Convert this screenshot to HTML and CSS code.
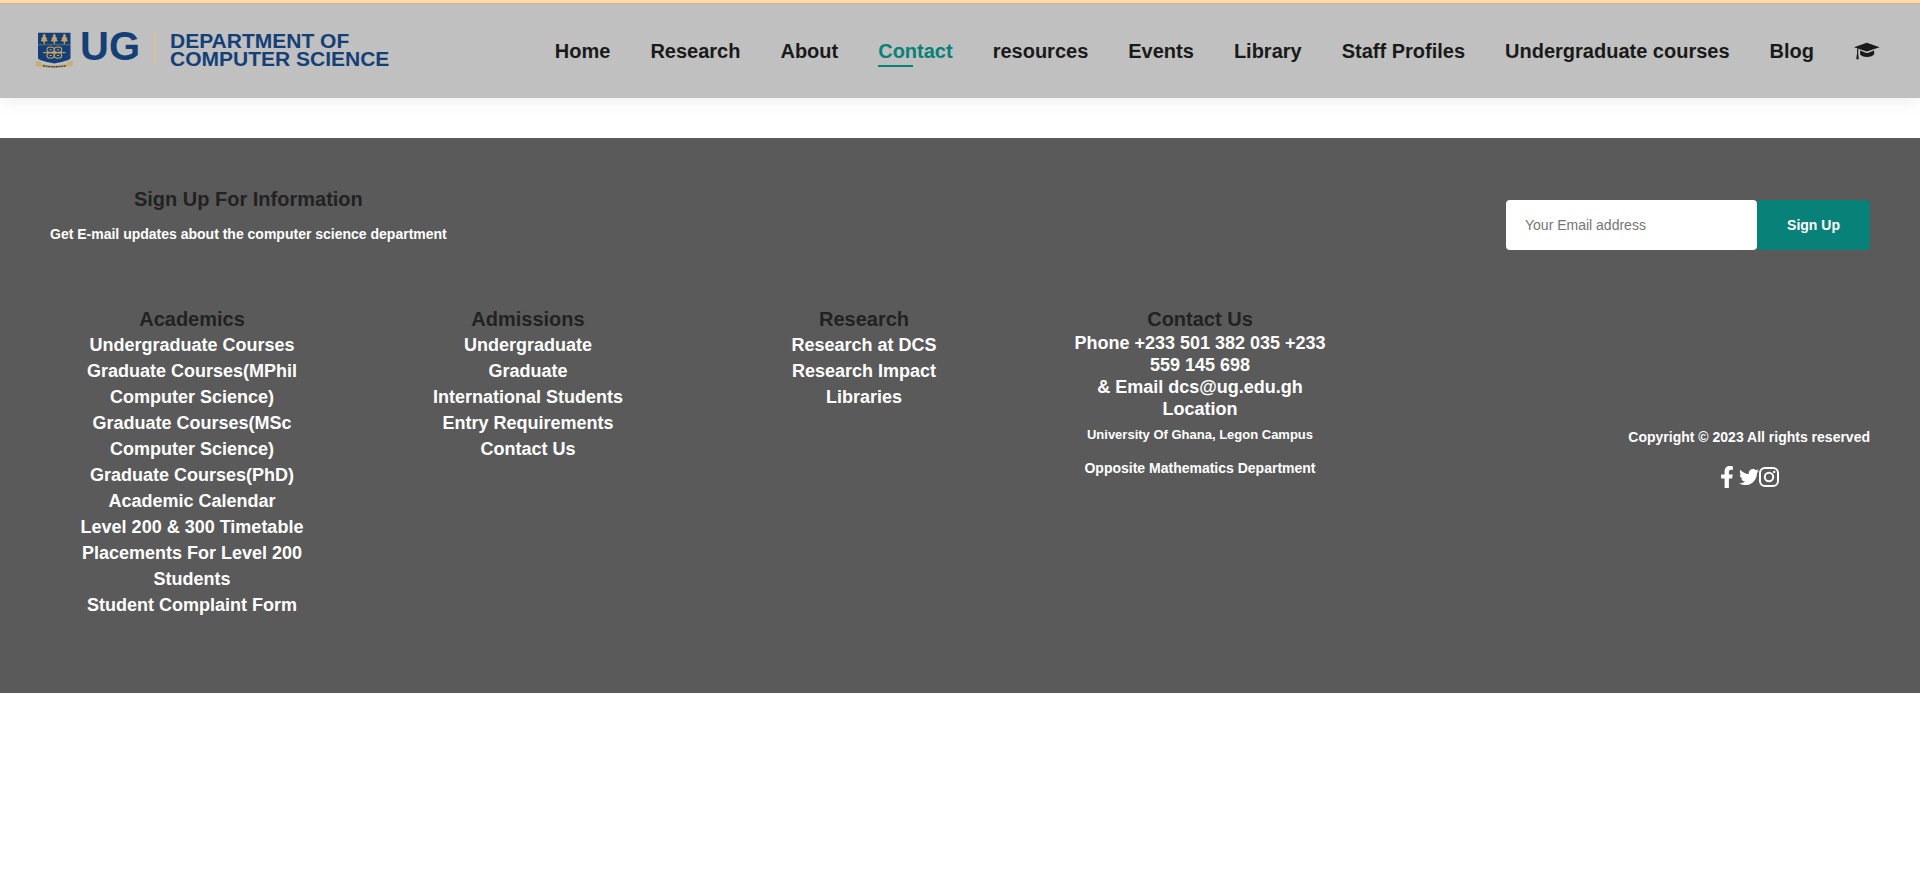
FILE: index.html
```html
<!DOCTYPE html>
<html lang="en">
<head>
<meta charset="utf-8">
<title>Department of Computer Science - Contact</title>
<link rel="stylesheet" href="styles.css">
</head>
<body>
<header class="header">
  <a class="logo" href="#">
    <svg class="crest" viewBox="0 0 40 37" aria-hidden="true">
      <path d="M4 .7h32.500v25c0 2.500-7 3.800-16.200 5.800C11 29.500 4 28.200 4 25.700z" fill="#153f77"/>
      <path d="M4 12.800h32.500" stroke="#8b8870" stroke-width=".7"/>
      <g fill="#c2a368">
        <path d="M10.200 1.500l1.800 2.600-.8.300 2.200 2-1 .5 1.400 2-3 .8v2.200H9.600V9.700l-3-.8 1.400-2-1-.5 2.200-2-.8-.3z"/>
        <path d="M20.300 1.500l1.800 2.600-.8.300 2.200 2-1 .5 1.400 2-3 .8v2.200h-1.200V9.700l-3-.8 1.400-2-1-.5 2.200-2-.8-.3z"/>
        <path d="M30.400 1.500l1.800 2.600-.8.300 2.200 2-1 .5 1.400 2-3 .8v2.200h-1.200V9.700l-3-.8 1.400-2-1-.5 2.200-2-.8-.3z"/>
      </g>
      <g fill="none" stroke="#c2a368" stroke-width="1.100">
        <path d="M9 20.600h22.600"/>
        <ellipse cx="16.600" cy="17.700" rx="3.700" ry="2.700"/><ellipse cx="24" cy="17.700" rx="3.700" ry="2.700"/>
        <ellipse cx="16.600" cy="23.500" rx="3.700" ry="2.700"/><ellipse cx="24" cy="23.500" rx="3.700" ry="2.700"/>
        <path d="M15.500 17.700h2.200M22.900 17.700h2.200M15.500 23.500h2.200M22.900 23.500h2.200"/>
      </g>
      <path d="M1.500 29.500q3-1 5 .3l1.500 2q12.300 3.400 24.600 0l1.500-2q2-1.300 5-.3l-.8 2 1.200 2.300-4 .7q-15.200 3.400-30.500 0l-4-.7 1.200-2.300z" fill="#c9ad78"/>
      <path d="M9 33.800q11.300 1.800 22.600 0" fill="none" stroke="#3b4450" stroke-width="1.400" stroke-dasharray="2 .6"/>
    </svg>
    <span class="logo-mark">UG</span>
    <span class="logo-name">DEPARTMENT OF<br>COMPUTER SCIENCE</span>
  </a>
  <nav>
    <ul class="nav">
      <li><a href="#">Home</a></li>
      <li><a href="#">Research</a></li>
      <li><a href="#">About</a></li>
      <li><a class="active" href="#">Contact</a></li>
      <li><a href="#">resources</a></li>
      <li><a href="#">Events</a></li>
      <li><a href="#">Library</a></li>
      <li><a href="#">Staff Profiles</a></li>
      <li><a href="#">Undergraduate courses</a></li>
      <li><a href="#">Blog</a></li>
      <li><a href="#" aria-label="Student portal"><svg class="cap" viewBox="0 0 27 18"><path d="M0 5L13.300.4 26.600 5 13.300 9.600z M6.500 8.600L12 10.700q1.500.5 3 0l5.800-2.100.2 3.900c-1 1.700-4 2.700-7.500 2.700s-6.500-1-7.200-2.700z M3.500 6.400l1.200.4q-.5 2-.4 4.200l.7 6.600H2.300L3.200 11q-.2-2.500.3-4.600z"/></svg></a></li>
    </ul>
  </nav>
</header>

<footer class="footer">
  <section class="newsletter">
    <div class="newsletter-text">
      <h4>Sign Up For Information</h4>
      <p>Get E-mail updates about the computer science department</p>
    </div>
    <form class="signup">
      <input type="email" placeholder="Your Email address" aria-label="Your Email address">
      <button type="button">Sign Up</button>
    </form>
  </section>

  <section class="columns">
    <div class="col">
      <h4>Academics</h4>
      <a href="#">Undergraduate Courses</a>
      <a href="#">Graduate Courses(MPhil Computer Science)</a>
      <a href="#">Graduate Courses(MSc Computer Science)</a>
      <a href="#">Graduate Courses(PhD)</a>
      <a href="#">Academic Calendar</a>
      <a href="#">Level 200 &amp; 300 Timetable</a>
      <a href="#">Placements For Level 200 Students</a>
      <a href="#">Student Complaint Form</a>
    </div>
    <div class="col">
      <h4>Admissions</h4>
      <a href="#">Undergraduate</a>
      <a href="#">Graduate</a>
      <a href="#">International Students</a>
      <a href="#">Entry Requirements</a>
      <a href="#">Contact Us</a>
    </div>
    <div class="col">
      <h4>Research</h4>
      <a href="#">Research at DCS</a>
      <a href="#">Research Impact</a>
      <a href="#">Libraries</a>
    </div>
    <div class="col">
      <h4>Contact Us</h4>
      <h5>Phone +233 501 382 035 +233 559 145 698</h5>
      <h5>&amp; Email dcs@ug.edu.gh</h5>
      <h5>Location</h5>
      <p class="campus">University Of Ghana, Legon Campus</p>
      <p class="building">Opposite Mathematics Department</p>
    </div>
    <div class="legal">
      <p>Copyright © 2023 All rights reserved</p>
      <div class="social">
        <a href="#" aria-label="Facebook"><svg class="facebook" viewBox="0 0 320 512"><path d="M279.140 288l14.220-92.660h-88.910v-60.130c0-25.350 12.420-50.060 52.240-50.060h40.420V6.260S260.430 0 225.360 0c-73.220 0-121.080 44.380-121.080 124.720v70.620H22.890V288h81.390v224h100.170V288z"/></svg></a>
        <a href="#" aria-label="Twitter"><svg class="twitter" viewBox="0 0 512 512"><path d="M459.370 151.716c.325 4.548.325 9.097.325 13.645 0 138.720-105.583 298.558-298.558 298.558-59.452 0-114.680-17.219-161.137-47.106 8.447.974 16.568 1.299 25.340 1.299 49.055 0 94.213-16.568 130.274-44.832-46.132-.975-84.792-31.188-98.112-72.772 6.498.974 12.995 1.624 19.818 1.624 9.421 0 18.843-1.300 27.614-3.573-48.081-9.747-84.143-51.980-84.143-102.985v-1.299c13.969 7.797 30.214 12.670 47.431 13.319-28.264-18.843-46.781-51.005-46.781-87.391 0-19.492 5.197-37.360 14.294-52.954 51.655 63.675 129.300 105.258 216.365 109.807-1.624-7.797-2.599-15.918-2.599-24.040 0-57.828 46.782-104.934 104.934-104.934 30.213 0 57.502 12.670 76.670 33.137 23.715-4.548 46.456-13.320 66.599-25.340-7.798 24.366-24.366 44.833-46.132 57.827 21.117-2.273 41.584-8.122 60.426-16.243-14.292 20.791-32.161 39.308-52.628 54.253z"/></svg></a>
        <a href="#" aria-label="Instagram"><svg class="instagram" viewBox="0 0 20 20"><rect x="1" y="1" width="18" height="18" rx="5"/><circle cx="10" cy="10" r="4.200"/><circle class="dot" cx="15.200" cy="4.900" r="1.200"/></svg></a>
      </div>
    </div>
  </section>
</footer>
</body>
</html>
```
FILE: styles.css
```css
* { box-sizing: border-box; margin: 0; padding: 0; }

body {
  font-family: "Liberation Sans", Arial, sans-serif;
  font-weight: 700;
  background: #fff;
}

a { text-decoration: none; }
svg { display: block; }

.header {
  display: flex;
  align-items: center;
  justify-content: space-between;
  min-height: 98px;
  padding: 0 40px 0 34px;
  background: #c0c0c0;
  border-top: 3px solid #ffdcb0;
  box-shadow: inset 0 1px 0 #ccb38c, 0 5px 15px rgba(0, 0, 0, 0.06);
}

.logo { display: flex; align-items: flex-start; color: #153f77; }
.crest { width: 40px; height: 37px; }
.logo-mark {
  margin-left: 6px;
  padding: 0 14px 5px 0;
  border-right: 2px solid #d3c09c;
  font-size: 40px;
  line-height: 28px;
}
.logo-name {
  margin-left: 14px;
  font-size: 21px;
  line-height: 18px;
}

.nav { display: flex; gap: 40px; list-style: none; }
.nav li { display: flex; align-items: center; }
.nav a {
  position: relative;
  color: #1a1a1a;
  font-size: 20px;
  line-height: 24px;
}
.nav .active { color: #088178; }
.nav .active::after {
  content: "";
  position: absolute;
  left: 0;
  bottom: -4px;
  width: 35px;
  height: 2px;
  background: #088178;
}
.cap { width: 26px; height: 18px; fill: #1a1a1a; }

.footer {
  margin-top: 40px;
  padding: 41px 50px 75px;
  background: #5a5a5a;
  color: #fff;
}
.footer h4 { color: #222; font-size: 20px; line-height: 26px; }

.newsletter {
  display: flex;
  align-items: center;
  justify-content: space-between;
}
.newsletter-text { text-align: center; }
.newsletter-text h4 { line-height: 40px; }
.newsletter-text p { margin-bottom: 22px; font-size: 14px; line-height: 30px; }

.signup { display: flex; }
.signup input {
  width: 251px;
  height: 50px;
  padding: 0 19px;
  border: 0;
  border-radius: 4px;
  background: #fff;
  font: 400 14px "Liberation Sans", Arial, sans-serif;
}
.signup input::placeholder { color: #757575; }
.signup button {
  width: 113px;
  height: 50px;
  border: 0;
  border-radius: 4px;
  background: #088178;
  color: #fff;
  font: 700 14px "Liberation Sans", Arial, sans-serif;
}

.columns {
  display: grid;
  grid-template-columns: repeat(4, 71fr) 119fr;
  gap: 52px;
  padding-top: 35px;
}
.col { padding: 0 12px; text-align: center; }
.col a { display: block; color: #fff; font-size: 18px; line-height: 26px; }
.col h5 { font-size: 18px; line-height: 22px; }
.campus { margin-top: 5px; font-size: 13px; line-height: 20px; }
.building { margin-top: 13px; font-size: 14px; line-height: 20px; }

.legal {
  align-self: center;
  justify-self: end;
  padding-bottom: 10px;
  text-align: center;
}
.legal p { font-size: 14px; line-height: 20px; }
.social {
  display: flex;
  align-items: center;
  justify-content: center;
  margin-top: 19px;
}
.social svg { fill: #fff; }
.facebook { width: 14px; height: 22px; margin-right: 5px; }
.twitter { width: 20px; height: 20px; }
.social .instagram {
  width: 20px;
  height: 20px;
  fill: none;
  stroke: #fff;
  stroke-width: 2;
}
.instagram .dot { fill: #fff; stroke: none; }
```
